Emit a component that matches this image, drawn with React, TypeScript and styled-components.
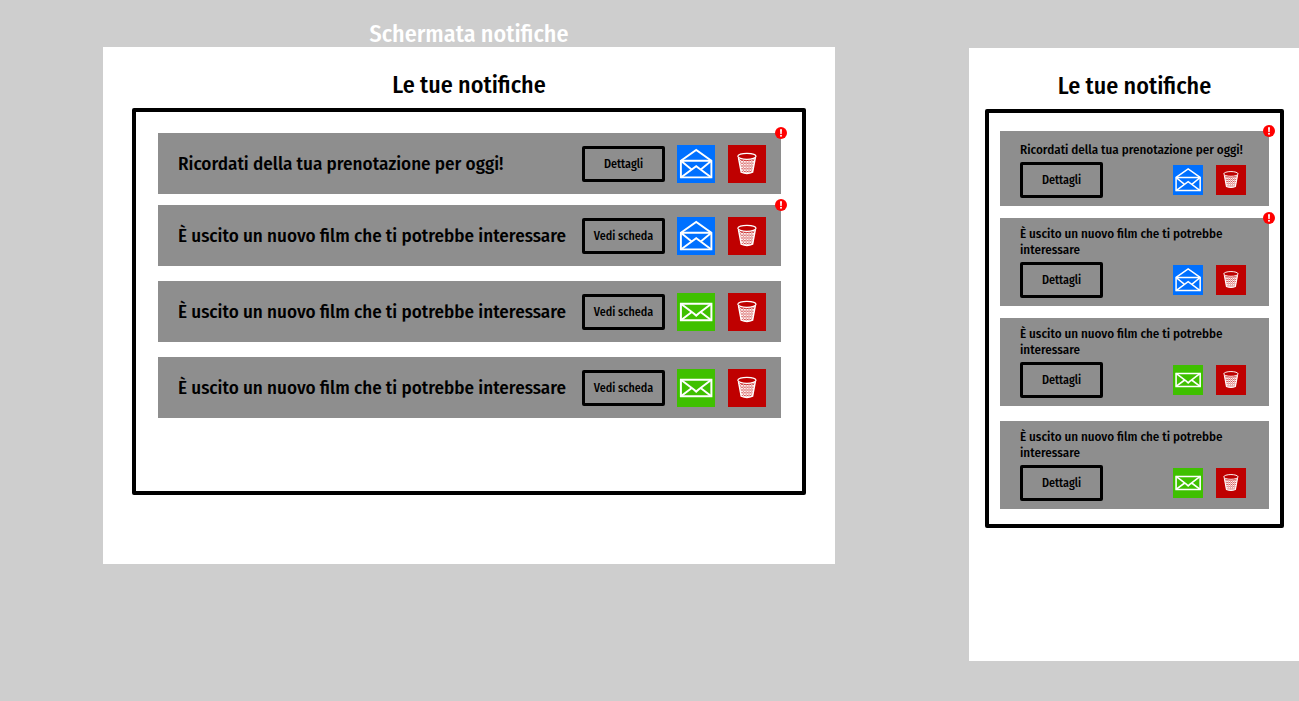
import React from "react";
import styled, { createGlobalStyle } from "styled-components";

const GlobalStyle = createGlobalStyle`
  *, *::before, *::after { box-sizing: border-box; }
  body {
    margin: 0;
    background: #cecece;
    color: #000;
    font-family: "Fira Sans Condensed", "Liberation Sans Narrow", "Open Sans", sans-serif;
    font-weight: 500;
  }
  h1, h2, p, ul { margin: 0; padding: 0; font-weight: inherit; }
`;

const Page = styled.main`
  display: flex;
  align-items: flex-start;
  gap: 134px;
  min-height: 100vh;
  padding-left: 103px;
`;

const WideColumn = styled.section`
  flex: 1;
  min-width: 0;
`;

const NarrowColumn = styled.section`
  flex: 0 0 330px;
  padding-top: 48px;
`;

const Caption = styled.h1`
  padding: 21px 0 0;
  font-size: 24px;
  line-height: 26px;
  text-align: center;
  color: #fff;
`;

const Screen = styled.div<{ $compact?: boolean }>`
  padding: ${(p) => (p.$compact ? "24px 15px 133px 16px" : "24px 29px 69px")};
  background: #fff;
`;

const Title = styled.h2`
  margin-bottom: 9px;
  font-size: 24px;
  line-height: 28px;
  text-align: center;
`;

const Panel = styled.div<{ $compact?: boolean }>`
  padding: ${(p) => (p.$compact ? "18px 11px 15px" : "21px 21px 73px 22px")};
  border: 4px solid #000;
  border-radius: 2px;
`;

const List = styled.ul<{ $gap: number; $before?: number }>`
  display: flex;
  flex-direction: column;
  gap: ${(p) => p.$gap}px;
  margin-top: ${(p) => p.$before ?? 0}px;
  list-style: none;
`;

const Row = styled.li`
  position: relative;
  display: flex;
  align-items: center;
  gap: 12px;
  min-height: 61px;
  padding: 0 15px 0 20px;
  background: #8e8e8e;
`;

const RowText = styled.p`
  flex: 1;
  font-size: 19px;
  line-height: 24px;
`;

const Card = styled.li`
  position: relative;
  padding: 8px 20px;
  background: #8e8e8e;
`;

const CardText = styled.p`
  display: flex;
  align-items: flex-end;
  min-height: 19px;
  margin-bottom: 4px;
  font-size: 13px;
  line-height: 16px;
`;

const CardActions = styled.div`
  display: flex;
  align-items: center;
  justify-content: space-between;
  padding-right: 3px;
`;

const IconGroup = styled.div`
  display: flex;
  gap: 13px;
`;

const DetailButton = styled.button`
  width: 83px;
  height: 36px;
  padding: 0;
  border: 3px solid #000;
  border-radius: 2px;
  background: transparent;
  color: inherit;
  font: inherit;
  font-size: 12px;
  line-height: 16px;
  white-space: nowrap;
`;

const tones = { open: "#0070ff", closed: "#3fc000", trash: "#bf0000" };

const IconButton = styled.button<{ $tone: keyof typeof tones; $size: number }>`
  display: block;
  width: ${(p) => p.$size}px;
  height: ${(p) => p.$size}px;
  padding: 0;
  border: 0;
  background: ${(p) => tones[p.$tone]};

  svg { display: block; width: 100%; height: 100%; }
`;

const Badge = styled.span`
  position: absolute;
  top: -6px;
  right: -6px;
  width: 12px;
  height: 12px;

  svg { display: block; }
`;

const OpenEnvelope = () => (
  <svg viewBox="0 0 38 38" fill="none" stroke="#fff" strokeWidth="1.9" aria-hidden="true">
    <path d="M3.9 15.8 19.2 5 34.4 15.8V32.4H3.9Z" />
    <path d="M3.9 15.8H34.4M3.9 32.4 19.2 21.2 34.4 32.4M3.9 15.8 14.6 24.5M34.4 15.8 23.8 24.5" />
  </svg>
);

const ClosedEnvelope = () => (
  <svg viewBox="0 0 38 38" fill="none" stroke="#fff" strokeWidth="2" aria-hidden="true">
    <path d="M3.9 10.7H34.4V27.2H3.9Z" />
    <path d="M3.9 10.7 16.8 20.5 19.2 22.6 21.6 20.5 34.4 10.7M3.9 27.2 14.8 19M34.4 27.2 23.6 19" />
  </svg>
);

const Bin = () => {
  const id = React.useId();
  return (
    <svg viewBox="0 0 38 38" fill="none" aria-hidden="true">
      <defs>
        <pattern id={id} width="2.8" height="2.8" patternUnits="userSpaceOnUse">
          <path d="M0 0 2.8 2.8M2.8 0 0 2.8" stroke="#fff" strokeWidth="1" />
        </pattern>
      </defs>
      <path d="M10.8 14 13 27Q19 29.4 24.8 27L27 14Q19 17 10.8 14Z" fill={`url(#${id})`} />
      <path d="M10.5 12.8 13.2 27.2Q19 29.8 24.6 27.2L27.3 12.8" stroke="#fff" strokeWidth="1.4" />
      <ellipse cx="18.9" cy="11.3" rx="9.1" ry="3" fill="#bf0000" stroke="#fff" strokeWidth="1.2" />
    </svg>
  );
};

const UnreadBadge = () => (
  <Badge role="img" aria-label="Non letta">
    <svg width="12" height="12" viewBox="0 0 12 12" aria-hidden="true">
      <circle cx="6" cy="6" r="6" fill="#f00" />
      <path d="M5 2.2H7L6.7 7H5.3Z" fill="#fff" />
      <circle cx="6" cy="8.8" r="1" fill="#fff" />
    </svg>
  </Badge>
);

type Notice = { text: string; action: string };

const reminder = "Ricordati della tua prenotazione per oggi!";
const newFilm = "È uscito un nuovo film che ti potrebbe interessare";

const unread: Notice[] = [
  { text: reminder, action: "Dettagli" },
  { text: newFilm, action: "Vedi scheda" },
];
const read: Notice[] = [
  { text: newFilm, action: "Vedi scheda" },
  { text: newFilm, action: "Vedi scheda" },
];

const Icons = ({ isNew, size }: { isNew: boolean; size: number }) => (
  <IconGroup>
    <IconButton
      type="button"
      $size={size}
      $tone={isNew ? "open" : "closed"}
      aria-label={isNew ? "Segna come letta" : "Segna come da leggere"}
    >
      {isNew ? <OpenEnvelope /> : <ClosedEnvelope />}
    </IconButton>
    <IconButton type="button" $size={size} $tone="trash" aria-label="Elimina">
      <Bin />
    </IconButton>
  </IconGroup>
);

const WideRow = ({ notice, isNew = false }: { notice: Notice; isNew?: boolean }) => (
  <Row>
    <RowText>{notice.text}</RowText>
    <DetailButton type="button">{notice.action}</DetailButton>
    <Icons isNew={isNew} size={38} />
    {isNew && <UnreadBadge />}
  </Row>
);

const NarrowCard = ({ notice, isNew = false }: { notice: Notice; isNew?: boolean }) => (
  <Card>
    <CardText>{notice.text}</CardText>
    <CardActions>
      <DetailButton type="button">Dettagli</DetailButton>
      <Icons isNew={isNew} size={30} />
    </CardActions>
    {isNew && <UnreadBadge />}
  </Card>
);

export default function App() {
  return (
    <>
      <GlobalStyle />
      <Page>
        <WideColumn>
          <Caption>Schermata notifiche</Caption>
          <Screen>
            <Title>Le tue notifiche</Title>
            <Panel>
              <List $gap={11}>
                {unread.map((n, i) => <WideRow key={i} notice={n} isNew />)}
              </List>
              <List $gap={15} $before={15}>
                {read.map((n, i) => <WideRow key={i} notice={n} />)}
              </List>
            </Panel>
          </Screen>
        </WideColumn>
        <NarrowColumn>
          <Screen $compact>
            <Title>Le tue notifiche</Title>
            <Panel $compact>
              <List $gap={12}>
                {unread.map((n, i) => <NarrowCard key={i} notice={n} isNew />)}
              </List>
              <List $gap={15} $before={12}>
                {read.map((n, i) => <NarrowCard key={i} notice={n} />)}
              </List>
            </Panel>
          </Screen>
        </NarrowColumn>
      </Page>
    </>
  );
}
